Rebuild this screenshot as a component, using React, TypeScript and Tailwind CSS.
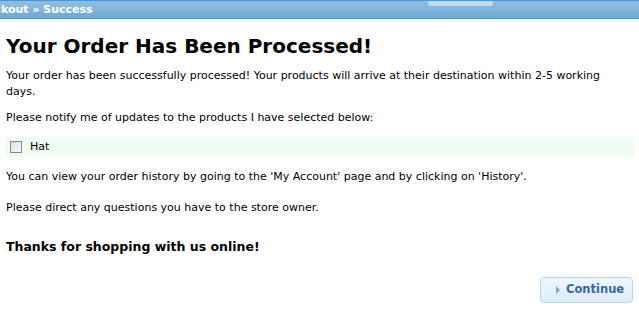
export default function App() {
  return (
    <div className="h-[317px] w-[639px] overflow-hidden bg-white font-['DejaVu_Sans',Verdana,sans-serif] text-[11px] text-black">
      {/* breadcrumb bar */}
      <div className="relative h-[19px] overflow-hidden border-y border-[#4896d6] bg-gradient-to-b from-[#8fbde0] to-[#7aaed6]">
        <div className="absolute left-[428px] top-0 h-[5px] w-[65px] rounded-b-[3px] bg-[#c4dcf0]" />
        <div className="absolute inset-x-0 bottom-0 h-[6px] bg-[#72a8d2]/60" />
        <div className="relative -ml-[29px] text-[11px] font-bold leading-[17px] text-white">
          Checkout » Success
        </div>
      </div>

      <div className="px-[6px]">
        <h1 className="mt-[15px] text-[20px] font-bold leading-[24px]">Your Order Has Been Processed!</h1>
        <p className="mt-[10px] w-[625px] leading-[16px]">
          Your order has been successfully processed! Your products will arrive at their destination within 2-5 working days.
        </p>
        <p className="mt-[10px] leading-[16px]">Please notify me of updates to the products I have selected below:</p>
        <div className="mt-[11px] -ml-px mr-[-1px] flex h-[20px] items-center bg-[#effdf3] pl-[5px]">
          <span className="block size-[12px] border border-[#8a8a8a] bg-gradient-to-br from-[#dcdcdc] to-[#fbfbfb]" />
          <span className="ml-[8px]">Hat</span>
        </div>
        <p className="mt-[12px] leading-[16px]">
          You can view your order history by going to the 'My Account' page and by clicking on 'History'.
        </p>
        <p className="mt-[15px] leading-[16px]">Please direct any questions you have to the store owner.</p>
        <p className="mt-[23px] text-[12.5px] font-bold leading-[16px]">Thanks for shopping with us online!</p>
        <div className="mt-[22px] flex justify-end">
          <button
            type="button"
            className="flex h-[26px] w-[93px] items-center gap-[6px] rounded-[4px] border border-[#bcd6ee] bg-gradient-to-b from-[#eef6fd] to-[#deedfa] pl-[15px] text-[11.5px] font-bold text-[#3168a4]"
          >
            <span className="block h-0 w-0 border-y-[4px] border-l-[4px] border-y-transparent border-l-[#7aa6cc]" />
            Continue
          </button>
        </div>
      </div>
    </div>
  );
}
